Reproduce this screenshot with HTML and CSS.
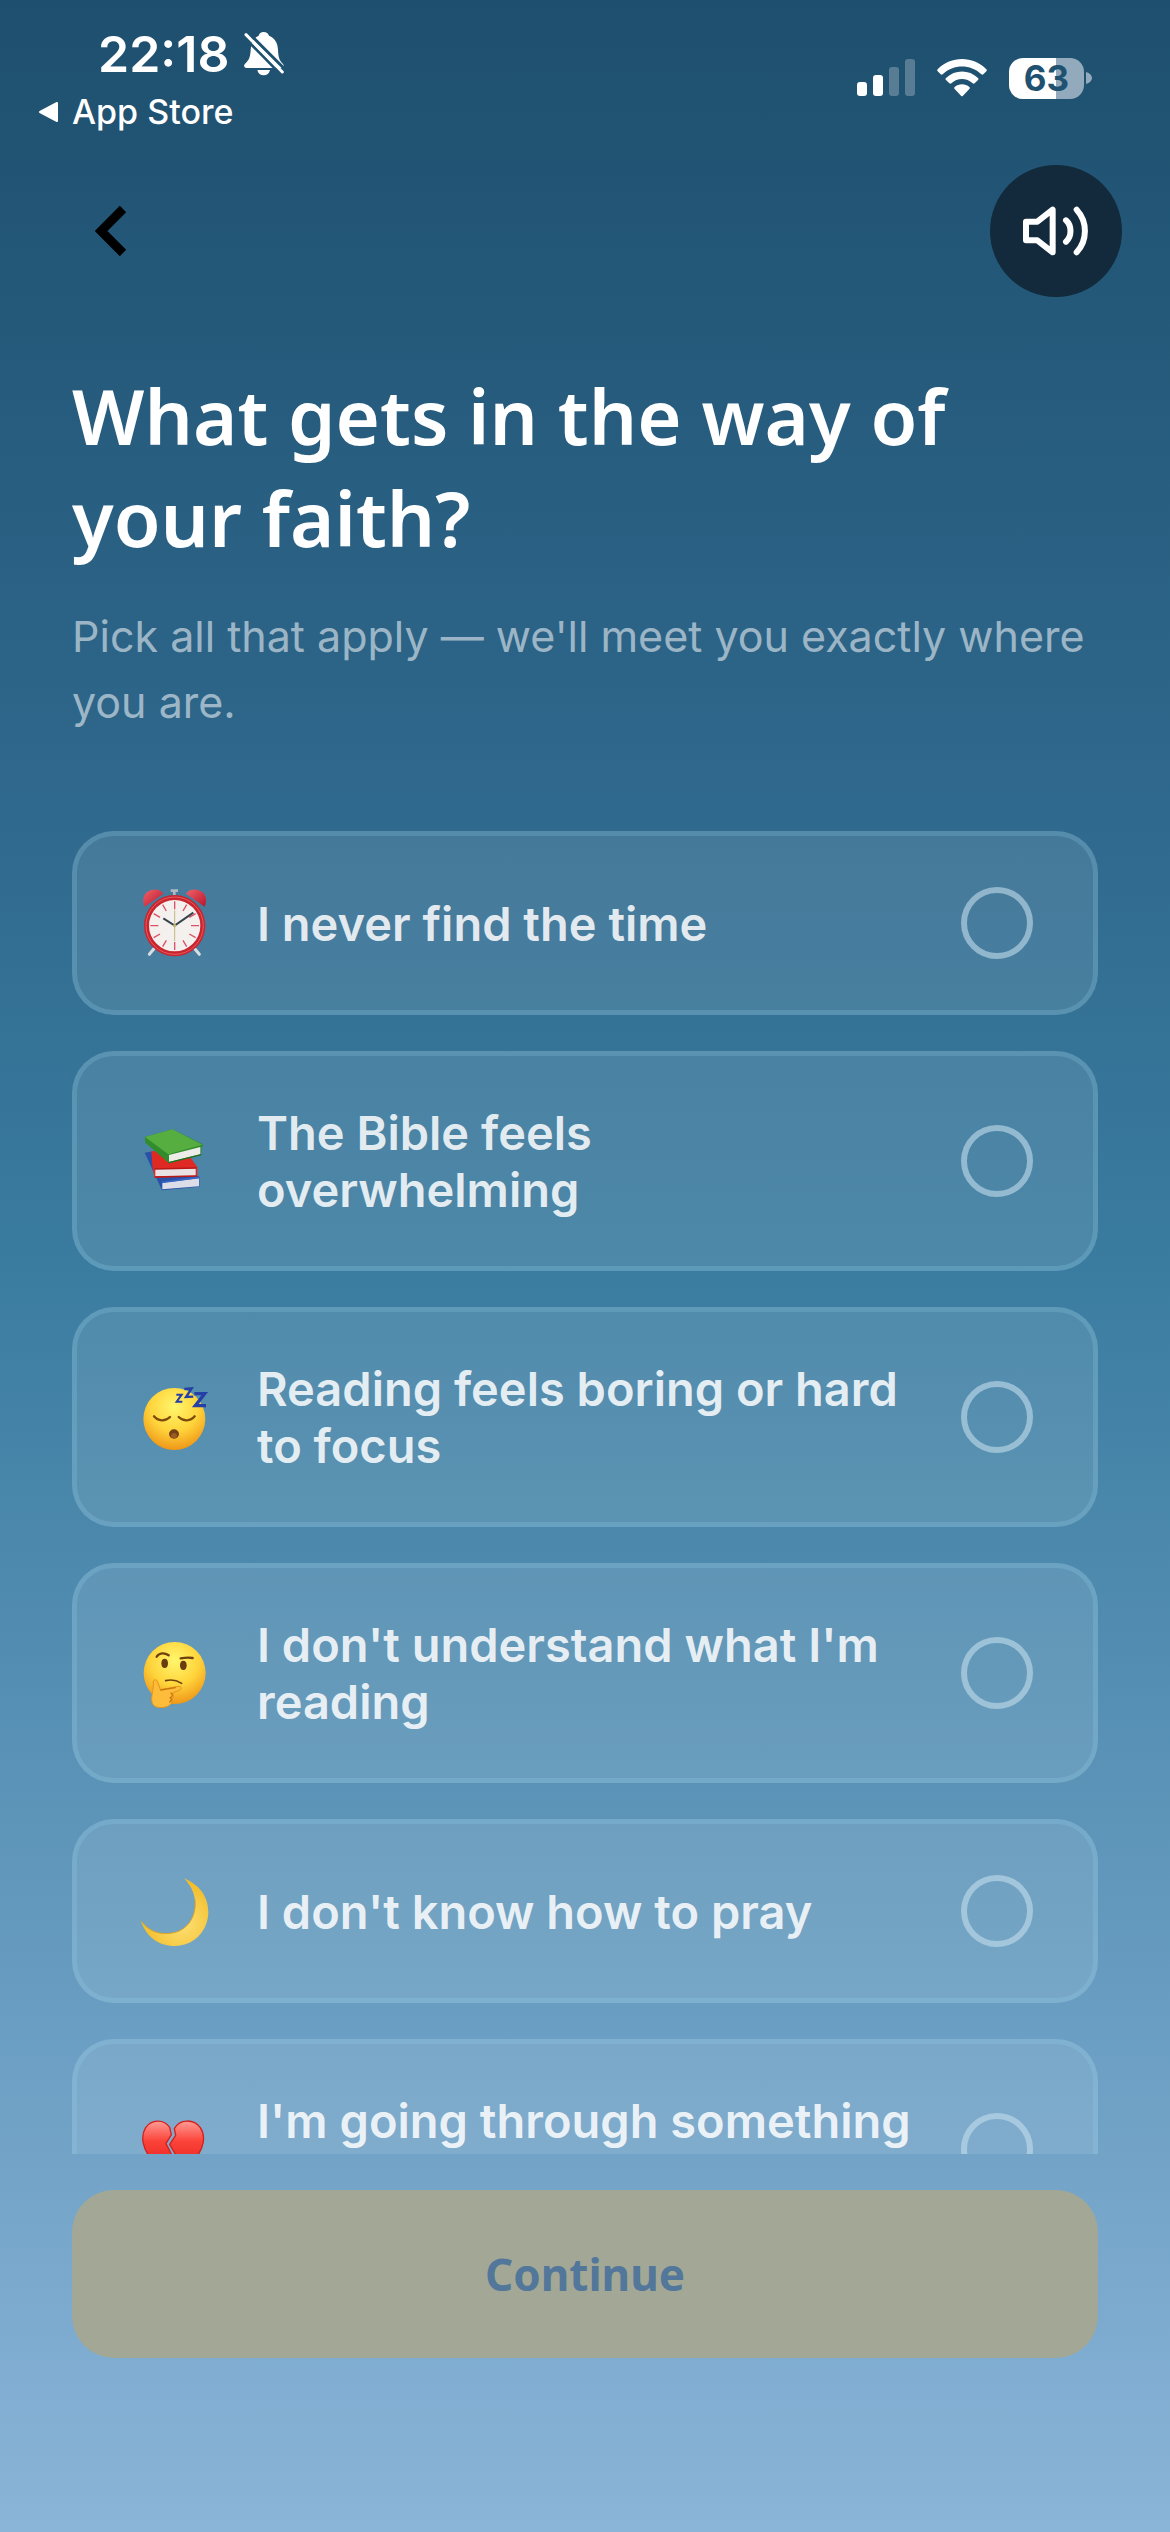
FILE: index.html
```html
<!DOCTYPE html>
<html lang="en">
<head>
    <meta charset="UTF-8">
    <meta name="viewport" content="width=device-width, initial-scale=1.0">
    <title>What gets in the way of your faith?</title>
    <link rel="stylesheet" href="styles.css">
</head>
<body>
    <div class="status-bar">
        <div class="status-left">
            <div class="clock">
                <span>22:18</span>
                <svg width="42" height="46" viewBox="0 0 126 138">
                    <path d="M62 3c8 0 14 5 16 11 18 7 26 22 27 42 1 24 5 33 15 43 4 5 2 12-5 12H11c-8 0-10-8-5-13 12-11 16-20 17-42 1-22 9-36 24-42 1-6 7-11 15-11z" fill="#fff"/>
                    <path d="M43 117h38c-2 10-9 16-19 16s-17-6-19-16z" fill="#fff"/>
                    <path d="M14 3L128 117" stroke="#1f5271" stroke-width="9"/>
                    <path d="M0 15L112 129" stroke="#1f5271" stroke-width="8"/>
                    <path d="M9 11L118 123" stroke="#fff" stroke-width="9" stroke-linecap="round"/>
                </svg>
            </div>
            <a class="back-to-app" href="#">
                <svg width="22" height="22" viewBox="0 0 22 22"><path d="M19 2v18L2 11z" fill="#fff" stroke="#fff" stroke-width="2" stroke-linejoin="round"/></svg>
                App Store
            </a>
        </div>
        <div class="status-right">
            <svg width="58" height="38" viewBox="0 0 58 38" fill="#fff">
                <rect x="0" y="23" width="10" height="14" rx="3"/>
                <rect x="16" y="16" width="10" height="21" rx="3"/>
                <rect x="32" y="8" width="10" height="29" rx="3" opacity=".25"/>
                <rect x="48" y="0" width="10" height="37" rx="3" opacity=".25"/>
            </svg>
            <svg width="50" height="38" viewBox="0 0 150 114" fill="#fff">
                <path d="M2 31C42-10 108-10 148 31c2 2 2 4 0 6l-9 9c-2 2-4 2-6 0-33-31-83-31-116 0-2 2-4 2-6 0l-9-9c-2-2-2-4 0-6z"/>
                <path d="M27 57c27-26 69-26 96 0 2 2 2 4 0 6l-10 10c-2 2-4 2-6 0-18-17-46-17-64 0-2 2-4 2-6 0L27 63c-2-2-2-4 0-6z"/>
                <path d="M53 84c12-11 32-11 44 0 2 2 2 4 0 6l-19 20c-2 2-4 2-6 0L53 90c-2-2-2-4 0-6z"/>
            </svg>
            <div class="battery">
                <span class="battery-level">63</span>
                <svg width="6" height="14" viewBox="0 0 6 14"><path d="M0 1c8 2 8 10 0 12z" fill="#92aabb"/></svg>
            </div>
        </div>
    </div>

    <div class="nav">
        <button class="back-button" type="button" aria-label="Back">
            <svg width="32" height="52" viewBox="0 0 32 52"><path d="M28 4L6 26l22 22" fill="none" stroke="#000" stroke-width="9"/></svg>
        </button>
        <button class="sound-button" type="button" aria-label="Sound">
            <svg width="68" height="50" viewBox="0 0 204 150" fill="none" stroke="#fff" stroke-width="18" stroke-linecap="round" stroke-linejoin="round">
                <path d="M12 47h34L92 11v128l-46-36H12z"/>
                <path d="M132 43c18 16 18 48 0 64"/>
                <path d="M164 11c33 36 33 92 0 128"/>
            </svg>
        </button>
    </div>

    <main class="content">
        <h1>What gets in the way of your faith?</h1>
        <p class="subtitle">Pick all that apply — we'll meet you exactly where you are.</p>

        <form class="options" id="obstacles">
            <label class="option">
                <svg class="emoji" viewBox="51 41 234 234">
                    <defs>
                        <linearGradient id="bell" x1="0" y1="0" x2="1" y2="1">
                            <stop offset="0" stop-color="#f0616a"/>
                            <stop offset="1" stop-color="#b9142a"/>
                        </linearGradient>
                    </defs>
                    <path d="M103 234l-15 18M223 234l15 18" stroke="#d7dde2" stroke-width="9" stroke-linecap="round"/>
                    <path d="M152 61h22M163 61v14" stroke="#aebbc4" stroke-width="8"/>
                    <path d="M74 109c-10-22-2-43 18-49 15-5 30-1 38 10z" fill="url(#bell)"/>
                    <path d="M254 109c10-22 2-43-18-49-15-5-30-1-38 10z" fill="url(#bell)"/>
                    <circle cx="164" cy="166" r="92" fill="#c9252f"/>
                    <circle cx="164" cy="166" r="86" fill="none" stroke="#e75a5d" stroke-width="3"/>
                    <circle cx="164" cy="166" r="77" fill="#f3f0ee"/>
                    <g stroke="#dc5068" stroke-width="4">
                        <path d="M164 93v24M164 215v24M91 166h24M213 166h24"/>
                        <path d="M128 103l11 19M200 103l-11 19M128 229l11-19M200 229l-11-19M101 130l19 11M101 202l19-11M227 202l-19-11M227 130l-19 11"/>
                    </g>
                    <path d="M164 120v92" stroke="#c3b77e" stroke-width="3"/>
                    <path d="M130 144l34 22 56-39" fill="none" stroke="#39434b" stroke-width="6"/>
                    <circle cx="164" cy="166" r="5" fill="#c3b77e"/>
                </svg>
                <span class="option-text">I never find the time</span>
                <input type="checkbox" name="obstacle" value="time">
            </label>
            <label class="option">
                <svg class="emoji" viewBox="51 51 234 234">
                    <path d="M74 143l26-4 138 76v30l-112 11z" fill="#2851a8"/>
                    <path d="M127 233l110-13v24l-110 9z" fill="#dcdde6"/>
                    <path d="M125 232l113-15" stroke="#3766c5" stroke-width="5"/>
                    <path d="M94 138l107 6 31 42v28l-128 4-7-35z" fill="#df2a23"/>
                    <path d="M106 192l121-2v22l-121 2z" fill="#e9e2e4"/>
                    <path d="M104 216l126-3M104 192l126-3" stroke="#b71919" stroke-width="4"/>
                    <path d="M75 96l82-23 90 44c3 3 3 7-2 10l-2 22-96 26L76 113z" fill="#318d2b"/>
                    <path d="M75 96l82-23 90 46-102 29z" fill="#57ae40"/>
                    <path d="M147 150l94-24v22l-94 23z" fill="#eeece9"/>
                    <path d="M146 173l98-24" stroke="#216e20" stroke-width="4"/>
                </svg>
                <span class="option-text">The Bible feels overwhelming</span>
                <input type="checkbox" name="obstacle" value="overwhelming">
            </label>
            <label class="option">
                <svg class="emoji" viewBox="51 51 234 234">
                    <defs>
                        <radialGradient id="face" cx=".5" cy=".3" r=".72">
                            <stop offset="0" stop-color="#fff66d"/>
                            <stop offset=".55" stop-color="#ffd43b"/>
                            <stop offset="1" stop-color="#ee9316"/>
                        </radialGradient>
                    </defs>
                    <circle cx="163" cy="174" r="93" fill="url(#face)"/>
                    <path d="M102 166c12 15 34 16 48 2M176 168c14 14 36 13 48-2" fill="none" stroke="#7e4a0c" stroke-width="7" stroke-linecap="round"/>
                    <ellipse cx="162" cy="219" rx="15" ry="14" fill="#744116"/>
                    <ellipse cx="162" cy="224" rx="9" ry="8" fill="#9b5b22"/>
                    <g fill="none" stroke="#263fa7">
                        <path d="M169 101h16l-15 21h17" stroke-width="6"/>
                        <path d="M193 84l22-2-17 26 22-1" stroke-width="7"/>
                        <path d="M223 98h31l-28 36h32" stroke-width="10"/>
                    </g>
                </svg>
                <span class="option-text">Reading feels boring or hard to focus</span>
                <input type="checkbox" name="obstacle" value="boring">
            </label>
            <label class="option">
                <svg class="emoji" viewBox="51 54 234 234">
                    <circle cx="164" cy="171" r="93" fill="url(#face)"/>
                    <ellipse cx="134" cy="142" rx="10" ry="14" fill="#6b3c0e"/>
                    <ellipse cx="190" cy="148" rx="10" ry="14" fill="#6b3c0e"/>
                    <path d="M110 122c8-12 23-13 36-4M182 127c12-2 23-3 36-1" fill="none" stroke="#70400f" stroke-width="7" stroke-linecap="round"/>
                    <path d="M137 194c15-4 32-2 48 8" fill="none" stroke="#70400f" stroke-width="5" stroke-linecap="round"/>
                    <path d="M100 195c5-7 12-3 14 6l7 20 55-10c9-1 10 9 2 12l-21 8c5 7 3 13 0 18 1 13-9 23-26 25-23 3-36-4-36-25 0-15 6-27 5-54z" fill="#fdbd3b" stroke="#e5941b" stroke-width="3"/>
                    <path d="M122 222l44-7M153 231c7 5 4 11-2 14 5 4 4 10-2 13" fill="none" stroke="#c9760f" stroke-width="4" stroke-linecap="round"/>
                </svg>
                <span class="option-text">I don't understand what I'm reading</span>
                <input type="checkbox" name="obstacle" value="understand">
            </label>
            <label class="option">
                <svg class="emoji" viewBox="51 48 234 234">
                    <defs>
                        <radialGradient id="moon" cx=".6" cy=".65" r=".6">
                            <stop offset="0" stop-color="#ffe278"/>
                            <stop offset="1" stop-color="#f1bd29"/>
                        </radialGradient>
                    </defs>
                    <path d="M192 67c47 19 74 57 73 104-2 57-46 99-101 99-48 0-85-27-101-75 27 35 58 41 94 36 48-8 73-52 68-99-3-26-16-47-33-65z" fill="url(#moon)"/>
                    <path d="M63 195c27 35 58 41 94 36 48-8 73-52 68-99" fill="none" stroke="#d9a326" stroke-width="3"/>
                </svg>
                <span class="option-text">I don't know how to pray</span>
                <input type="checkbox" name="obstacle" value="pray">
            </label>
            <label class="option">
                <svg class="emoji" viewBox="0 0 234 234">
                    <defs>
                        <linearGradient id="heart" x1="0" y1="0" x2="0" y2="1">
                            <stop offset="0" stop-color="#ff9b94"/>
                            <stop offset=".35" stop-color="#fb4339"/>
                            <stop offset="1" stop-color="#dd1717"/>
                        </linearGradient>
                    </defs>
                    <g fill="url(#heart)" stroke="#d3201d" stroke-width="4" stroke-linejoin="round">
                        <path d="M98 52C80 26 43 28 26 53c-17 27-8 64 16 92 17 21 40 37 60 59l-9-40 12-28-18-35 16-27z"/>
                        <path d="M112 56c16-30 58-30 78-3 18 27 9 64-15 92-19 21-41 37-65 63l-7-42 14-30-19-33 18-27z"/>
                    </g>
                </svg>
                <span class="option-text">I'm going through something<br>&nbsp;</span>
                <input type="checkbox" name="obstacle" value="something">
            </label>
        </form>

        <button class="continue-button" type="submit" form="obstacles" disabled>Continue</button>
    </main>
</body>
</html>
```

FILE: styles.css
```css
* {
    box-sizing: border-box;
}
body {
    margin: 0;
    height: 100vh;
    display: flex;
    flex-direction: column;
    font-family: Inter, "Liberation Sans", sans-serif;
    color: #fff;
    background: linear-gradient(#1e4f6e 0%, #2e678b 30%, #3a7ca0 50%, #6a9ec2 80%, #8ab4d8 100%);
}
button {
    padding: 0;
    border: none;
    background: none;
    font: inherit;
    cursor: pointer;
}
svg {
    display: block;
    flex-shrink: 0;
}

/* status bar */
.status-bar {
    display: flex;
    justify-content: space-between;
    height: 165px;
    padding: 24px 78px 0 38px;
}
.clock {
    display: flex;
    align-items: center;
    gap: 14px;
    padding-left: 60px;
    font-size: 50px;
    font-weight: 600;
    line-height: 60px;
}
.back-to-app {
    display: flex;
    align-items: center;
    gap: 12px;
    font-size: 34px;
    font-weight: 500;
    line-height: 56px;
    color: #fff;
    text-decoration: none;
}
.status-right {
    display: flex;
    align-items: center;
    gap: 22px;
    height: 108px;
}
.battery {
    display: flex;
    align-items: center;
    gap: 2px;
}
.battery-level {
    width: 75px;
    border-radius: 14px;
    background: linear-gradient(90deg, #fff 63%, #92aabb 63%);
    color: #1f5271;
    font-size: 35px;
    font-weight: 700;
    line-height: 41px;
    text-align: center;
}

/* top buttons */
.nav {
    display: flex;
    justify-content: space-between;
    padding: 0 48px 0 72px;
}
.back-button {
    display: flex;
    align-items: center;
    justify-content: center;
    width: 78px;
}
.sound-button {
    display: flex;
    align-items: center;
    justify-content: center;
    width: 132px;
    height: 132px;
    border-radius: 50%;
    background-color: #122a3b;
}

.content {
    flex: 1;
    min-height: 0;
    display: flex;
    flex-direction: column;
    padding: 68px 72px 174px;
}
h1 {
    margin: 0 0 34px;
    font-family: "Noto Sans", sans-serif;
    font-size: 76px;
    font-weight: 600;
    line-height: 102px;
}
.subtitle {
    margin: 0 0 96px;
    font-size: 43px;
    line-height: 66px;
    color: rgba(255, 255, 255, 0.55);
}

/* answer cards */
.options {
    flex: 1;
    min-height: 0;
    display: flex;
    flex-direction: column;
    gap: 36px;
    margin-bottom: 36px;
    overflow-y: auto;
    scrollbar-width: none;
}
.option {
    flex-shrink: 0;
    display: flex;
    align-items: center;
    padding: 48px 60px;
    border: 5px solid rgba(150, 210, 235, 0.22);
    border-radius: 42px;
    background-color: rgba(255, 255, 255, 0.1);
    cursor: pointer;
}
.emoji {
    width: 78px;
    height: 78px;
    margin-right: 42px;
}
.option-text {
    flex: 1;
    margin-right: 40px;
    font-size: 47px;
    font-weight: 600;
    line-height: 57px;
    color: rgba(255, 255, 255, 0.85);
}
.option input {
    appearance: none;
    flex-shrink: 0;
    width: 72px;
    height: 72px;
    margin: 0;
    border: 6px solid rgba(195, 222, 236, 0.6);
    border-radius: 50%;
}
.option input:checked {
    background-color: #fff;
}

.continue-button {
    height: 168px;
    flex-shrink: 0;
    border-radius: 42px;
    background-color: #a2a895;
    color: #52779a;
    font-family: "Noto Sans", sans-serif;
    font-size: 44px;
    font-weight: 700;
}
```
